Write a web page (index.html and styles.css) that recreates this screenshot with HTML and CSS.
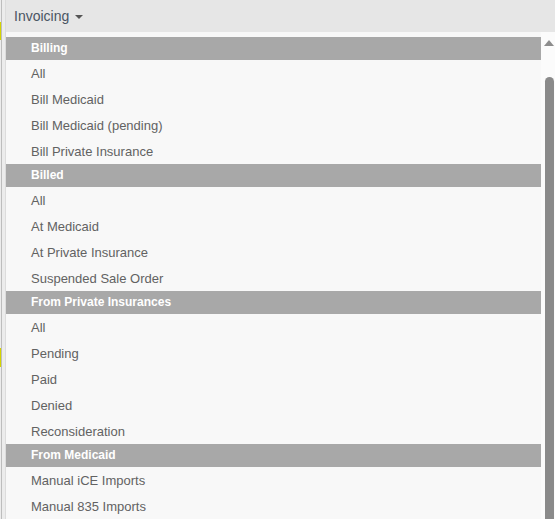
FILE: index.html
```html
<!DOCTYPE html>
<html>
<head>
<meta charset="utf-8">
<link rel="stylesheet" href="styles.css">
</head>
<body>
<div class="app">
  <div class="edge"></div>
  <div class="main">
    <div class="topbar">
      <span class="title">Invoicing</span><span class="caret"></span>
    </div>
    <div class="body-row">
      <div class="panel">
        <div class="group">Billing</div>
        <div class="item">All</div>
        <div class="item">Bill Medicaid</div>
        <div class="item">Bill Medicaid (pending)</div>
        <div class="item">Bill Private Insurance</div>
        <div class="group">Billed</div>
        <div class="item">All</div>
        <div class="item">At Medicaid</div>
        <div class="item">At Private Insurance</div>
        <div class="item">Suspended Sale Order</div>
        <div class="group">From Private Insurances</div>
        <div class="item">All</div>
        <div class="item">Pending</div>
        <div class="item">Paid</div>
        <div class="item">Denied</div>
        <div class="item">Reconsideration</div>
        <div class="group">From Medicaid</div>
        <div class="item">Manual iCE Imports</div>
        <div class="item">Manual 835 Imports</div>
      </div>
      <div class="scrollbar">
        <div class="arrow-up"></div>
        <div class="thumb"></div>
      </div>
    </div>
  </div>
</div>
</body>
</html>
```
FILE: styles.css
```css
html, body {
  margin: 0;
  padding: 0;
}
body {
  width: 555px;
  height: 519px;
  overflow: hidden;
  font-family: "Liberation Sans", Arial, sans-serif;
  background: #f8f8f8;
}
.app {
  display: flex;
  height: 519px;
}
.edge {
  width: 6px;
  flex: none;
  box-sizing: border-box;
  border-right: 1px solid #dcdcdc;
  background:
    linear-gradient(to right, transparent 1px, #bdbdbd 1px, #bdbdbd 2px, transparent 2px),
    linear-gradient(to bottom, transparent 22px, #d4d400 22px, #d4d400 40px, transparent 40px, transparent 348px, #d4d400 348px, #d4d400 367px, transparent 367px) left top / 1px 100% no-repeat,
    #ececec;
}
.main {
  flex: 1;
  display: flex;
  flex-direction: column;
}
.topbar {
  height: 32px;
  flex: none;
  background: #e6e6e6;
  display: flex;
  align-items: center;
  padding-left: 8px;
  box-sizing: border-box;
}
.title {
  font-size: 14px;
  color: #4a5563;
}
.caret {
  width: 0;
  height: 0;
  margin-left: 6px;
  margin-top: 1px;
  border-left: 4px solid transparent;
  border-right: 4px solid transparent;
  border-top: 4px solid #555;
}
.body-row {
  display: flex;
  flex: 1;
}
.panel {
  width: 535px;
  flex: none;
  background: #f8f8f8;
  padding-top: 5px;
}
.group {
  height: 23px;
  line-height: 23px;
  background: #a8a8a8;
  color: #fff;
  font-weight: bold;
  font-size: 12px;
  padding-left: 25px;
}
.item {
  height: 24px;
  line-height: 24px;
  padding-top: 2px;
  font-size: 13px;
  color: #626262;
  padding-left: 25px;
}
.scrollbar {
  flex: 1;
  background: #fbfbfb;
  display: flex;
  flex-direction: column;
  align-items: center;
  padding-top: 8px;
  padding-left: 2px;
}
.arrow-up {
  width: 0;
  height: 0;
  border-left: 5px solid transparent;
  border-right: 5px solid transparent;
  border-bottom: 6px solid #8c8c8c;
}
.thumb {
  margin-top: 31px;
  width: 9px;
  flex: 1;
  background: #8a8a8a;
  border-radius: 5px 5px 0 0;
}
```
